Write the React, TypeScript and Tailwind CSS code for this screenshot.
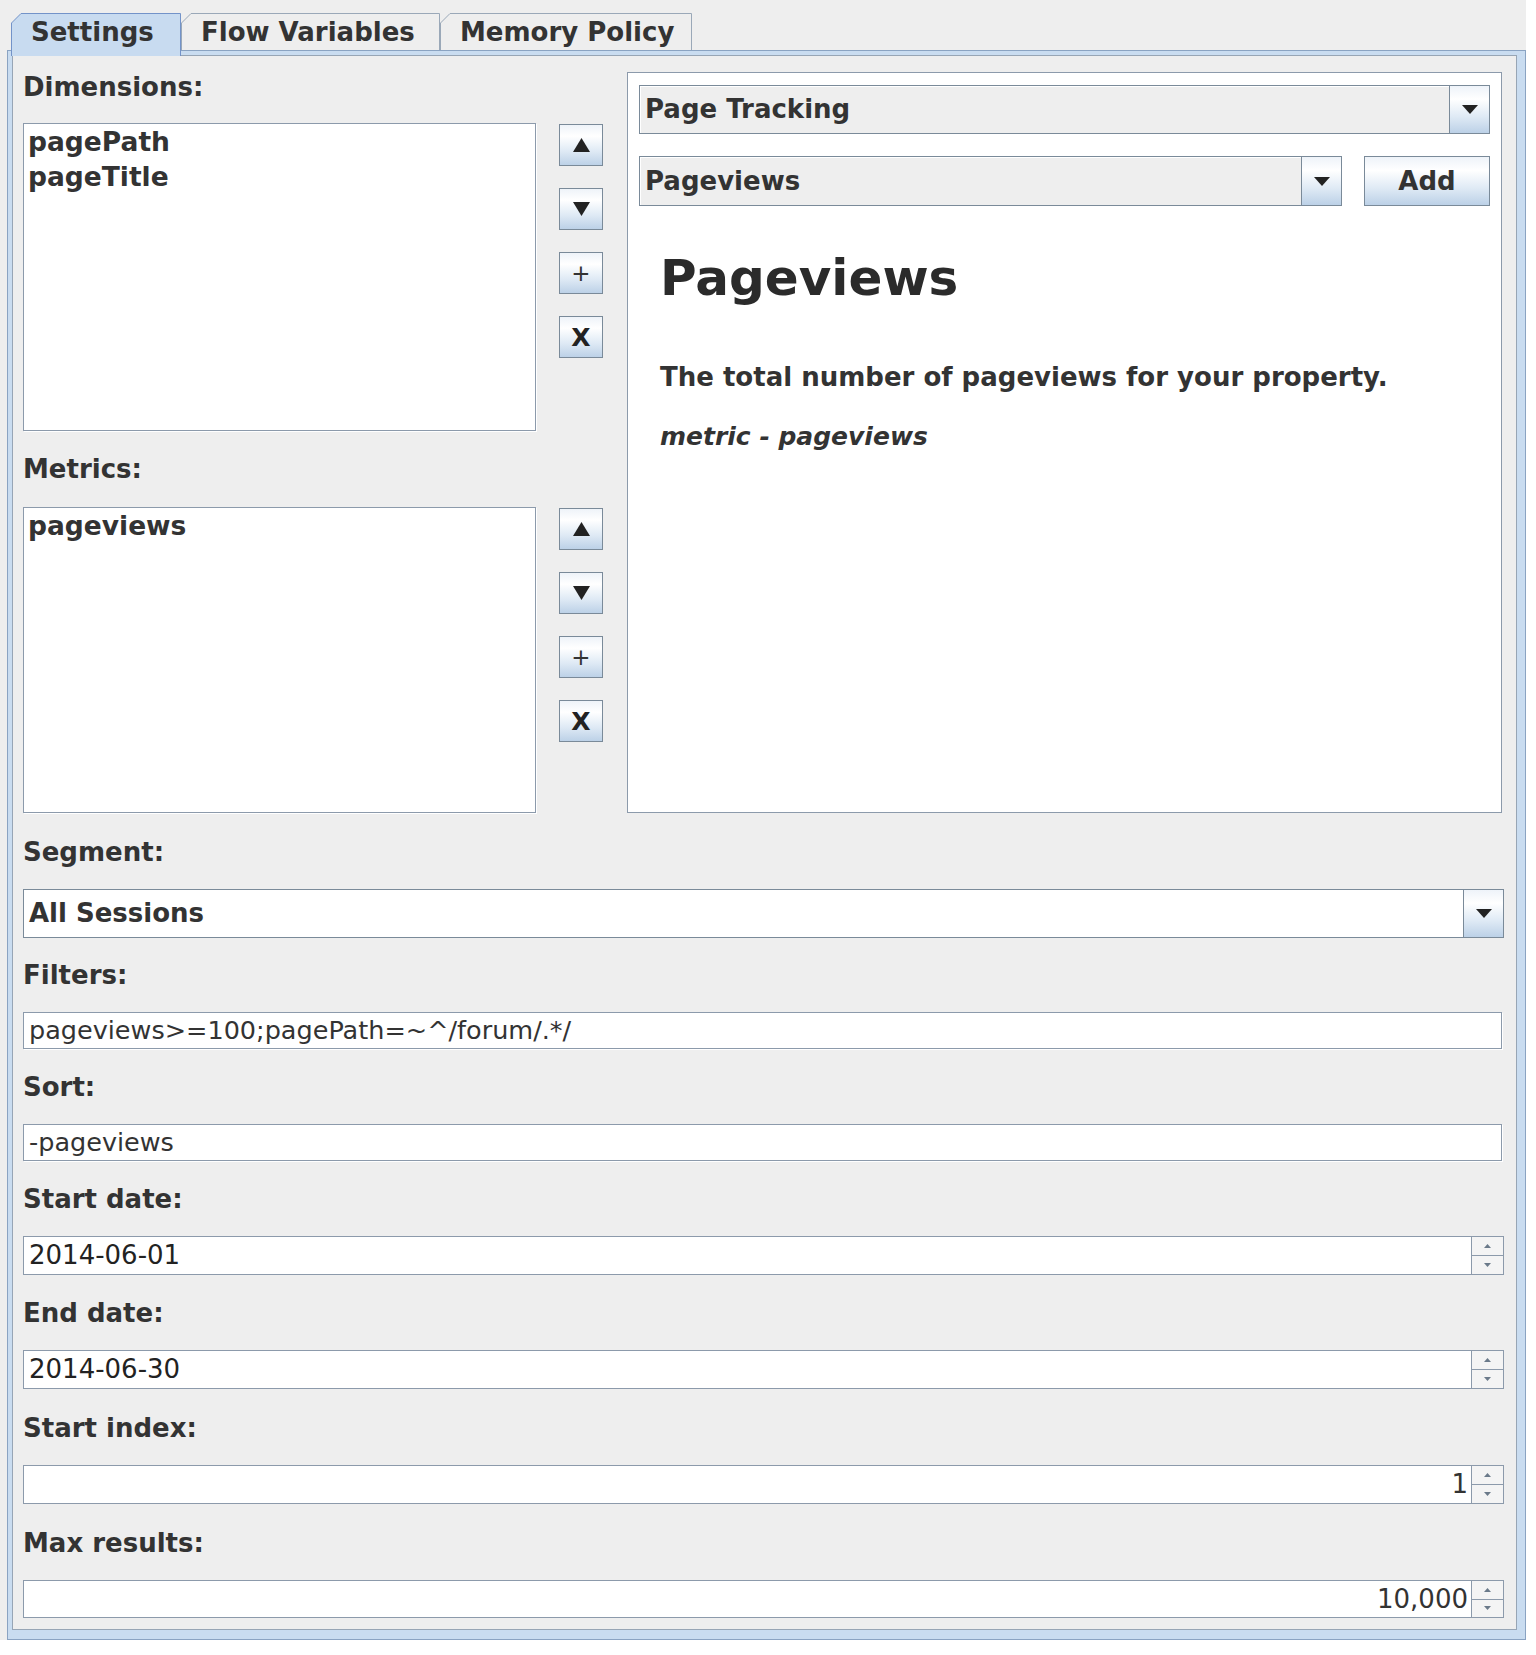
import React from 'react';

const btnBg =
  'bg-[linear-gradient(to_bottom,#eef3f9_0%,#ffffff_28%,#dfeaf5_65%,#bcd1e7_100%)]';

function Tri({ dir, w, h, color = '#222222' }: { dir: 'up' | 'down'; w: number; h: number; color?: string }) {
  const pts = dir === 'up' ? `0,${h} ${w / 2},0 ${w},${h}` : `0,0 ${w},0 ${w / 2},${h}`;
  return (
    <svg width={w} height={h} viewBox={`0 0 ${w} ${h}`}>
      <polygon points={pts} fill={color} />
    </svg>
  );
}

function Tab({ label, width, selected }: { label: string; width: number; selected?: boolean }) {
  const h = selected ? 43 : 37;
  return (
    <div className="relative h-[37px] flex items-center" style={{ width }}>
      <svg className="absolute left-0 top-0" width={width} height={h} viewBox={`0 0 ${width} ${h}`}>
        <path
          d={`M0.5,${h} L0.5,10 L10,0.5 L${width - 0.5},0.5 L${width - 0.5},${h}`}
          fill={selected ? '#c8dbf0' : '#eeeeee'}
          stroke={selected ? '#7393c9' : '#9aa8b8'}
          strokeWidth="1"
        />
      </svg>
      <span className="relative pl-[20px] text-[26px] font-bold leading-none">{label}</span>
    </div>
  );
}

function Label({ children, className = '' }: { children: React.ReactNode; className?: string }) {
  return <div className={`h-[30px] leading-[30px] text-[26px] font-bold ${className}`}>{children}</div>;
}

function SideButton({ children }: { children: React.ReactNode }) {
  return (
    <div className={`w-[44px] h-[42px] border border-[#7a8a99] ${btnBg} flex items-center justify-center`}>
      {children}
    </div>
  );
}

function ListPanel({ items, height }: { items: string[]; height: number }) {
  return (
    <div className="flex">
      <div
        className="w-[513px] bg-white border border-[#8c9aab] shadow-[1px_1px_0_#ffffff] pt-[1px] pl-[4px]"
        style={{ height }}
      >
        {items.map((it) => (
          <div key={it} className="h-[34.5px] leading-[34.5px] text-[26.5px] font-bold">
            {it}
          </div>
        ))}
      </div>
      <div className="ml-[23px] pt-[1px] flex flex-col gap-[22px]">
        <SideButton>
          <Tri dir="up" w={17} h={14} />
        </SideButton>
        <SideButton>
          <Tri dir="down" w={17} h={14} />
        </SideButton>
        <SideButton>
          <span className="text-[23px] leading-none text-[#333333]">+</span>
        </SideButton>
        <SideButton>
          <span className="text-[25px] font-bold leading-none text-[#222222]">X</span>
        </SideButton>
      </div>
    </div>
  );
}

function Combo({ text, white, height }: { text: string; white?: boolean; height: number }) {
  return (
    <div
      className={`flex border border-[#7a8a99] ${white ? 'bg-white' : 'bg-[#eeeeee] shadow-[inset_1px_1px_0_#ffffff]'}`}
      style={{ height }}
    >
      <div className="flex-1 flex items-center pl-[5px] text-[26px] font-bold">{text}</div>
      <div className={`w-[40px] border-l border-[#7a8a99] ${btnBg} flex items-center justify-center`}>
        <Tri dir="down" w={16} h={9} />
      </div>
    </div>
  );
}

function TextField({ value }: { value: string }) {
  return (
    <div className="mr-[2px] h-[37px] bg-white border border-[#8c9aab] shadow-[1px_1px_0_#ffffff] flex items-center pl-[5px] text-[25.5px]">
      {value}
    </div>
  );
}

function Spinner({ value, right, height = 39 }: { value: string; right?: boolean; height?: number }) {
  return (
    <div className="flex" style={{ height }}>
      <div
        className={`flex-1 bg-white border border-[#8c9aab] flex items-center text-[26px] ${
          right ? 'justify-end pr-[3px]' : 'pl-[5px] text-[#222222]'
        }`}
      >
        {value}
      </div>
      <div className="w-[32px] flex flex-col border border-l-0 border-[#8c9aab] bg-[#f4f4f4]">
        <div className="flex-1 border-b border-[#8c9aab] flex items-center justify-center">
          <Tri dir="up" w={7} h={4} color="#6b7a8a" />
        </div>
        <div className="flex-1 flex items-center justify-center">
          <Tri dir="down" w={7} h={4} color="#6b7a8a" />
        </div>
      </div>
    </div>
  );
}

export default function App() {
  return (
    <div className="w-[1536px] h-[1655px] bg-white font-['DejaVu_Sans',sans-serif] text-[#333333]">
      <div className="w-[1526px] bg-[#eeeeee] pt-[13px]">
        {/* tabs */}
        <div className="relative z-10 flex ml-[11px]">
          <Tab label="Settings" width={170} selected />
          <Tab label="Flow Variables" width={259} />
          <Tab label="Memory Policy" width={252} />
        </div>

        {/* tab content */}
        <div className="ml-[7px] w-[1519px] border border-[#8aa3c2] bg-[#c9dcf0] pl-[4px] pr-[8px] pt-[4px] pb-[9px]">
          <div className="border border-[#97a5b5] bg-[#eeeeee] pl-[10px] pr-[12px] pt-[16px] pb-[11px]">
            <div className="flex">
              <div className="w-[580px] flex flex-col">
                <Label>Dimensions:</Label>
                <div className="mt-[21px]">
                  <ListPanel items={['pagePath', 'pageTitle']} height={308} />
                </div>
                <Label className="mt-[23px]">Metrics:</Label>
                <div className="mt-[23px]">
                  <ListPanel items={['pageviews']} height={306} />
                </div>
              </div>

              <div className="ml-[24px] mr-[2px] flex-1 h-[741px] bg-white border border-[#8c9aab] pt-[12px] px-[11px]">
                <Combo text="Page Tracking" height={49} />
                <div className="mt-[22px] flex">
                  <div className="flex-1">
                    <Combo text="Pageviews" height={50} />
                  </div>
                  <div
                    className={`ml-[22px] w-[126px] h-[50px] border border-[#7a8a99] ${btnBg} flex items-center justify-center text-[26px] font-bold`}
                  >
                    Add
                  </div>
                </div>
                <div className="pl-[21px]">
                  <div className="mt-[48px] h-[49px] leading-[49px] text-[50px] font-bold text-[#2b2b2b]">Pageviews</div>
                  <div className="mt-[59px] h-[30px] leading-[30px] text-[26px] font-bold">
                    The total number of pageviews for your property.
                  </div>
                  <div className="mt-[30px] h-[30px] leading-[30px] text-[25px] font-bold italic">metric - pageviews</div>
                </div>
              </div>
            </div>

            <Label className="mt-[24px]">Segment:</Label>
            <div className="mt-[22px]">
              <Combo text="All Sessions" white height={49} />
            </div>

            <Label className="mt-[22px]">Filters:</Label>
            <div className="mt-[22px]">
              <TextField value="pageviews>=100;pagePath=~^/forum/.*/" />
            </div>

            <Label className="mt-[23px]">Sort:</Label>
            <div className="mt-[22px]">
              <TextField value="-pageviews" />
            </div>

            <Label className="mt-[23px]">Start date:</Label>
            <div className="mt-[22px]">
              <Spinner value="2014-06-01" />
            </div>

            <Label className="mt-[23px]">End date:</Label>
            <div className="mt-[22px]">
              <Spinner value="2014-06-30" />
            </div>

            <Label className="mt-[24px]">Start index:</Label>
            <div className="mt-[22px]">
              <Spinner value="1" right />
            </div>

            <Label className="mt-[24px]">Max results:</Label>
            <div className="mt-[22px]">
              <Spinner value="10,000" right height={38} />
            </div>
          </div>
        </div>
      </div>
    </div>
  );
}
